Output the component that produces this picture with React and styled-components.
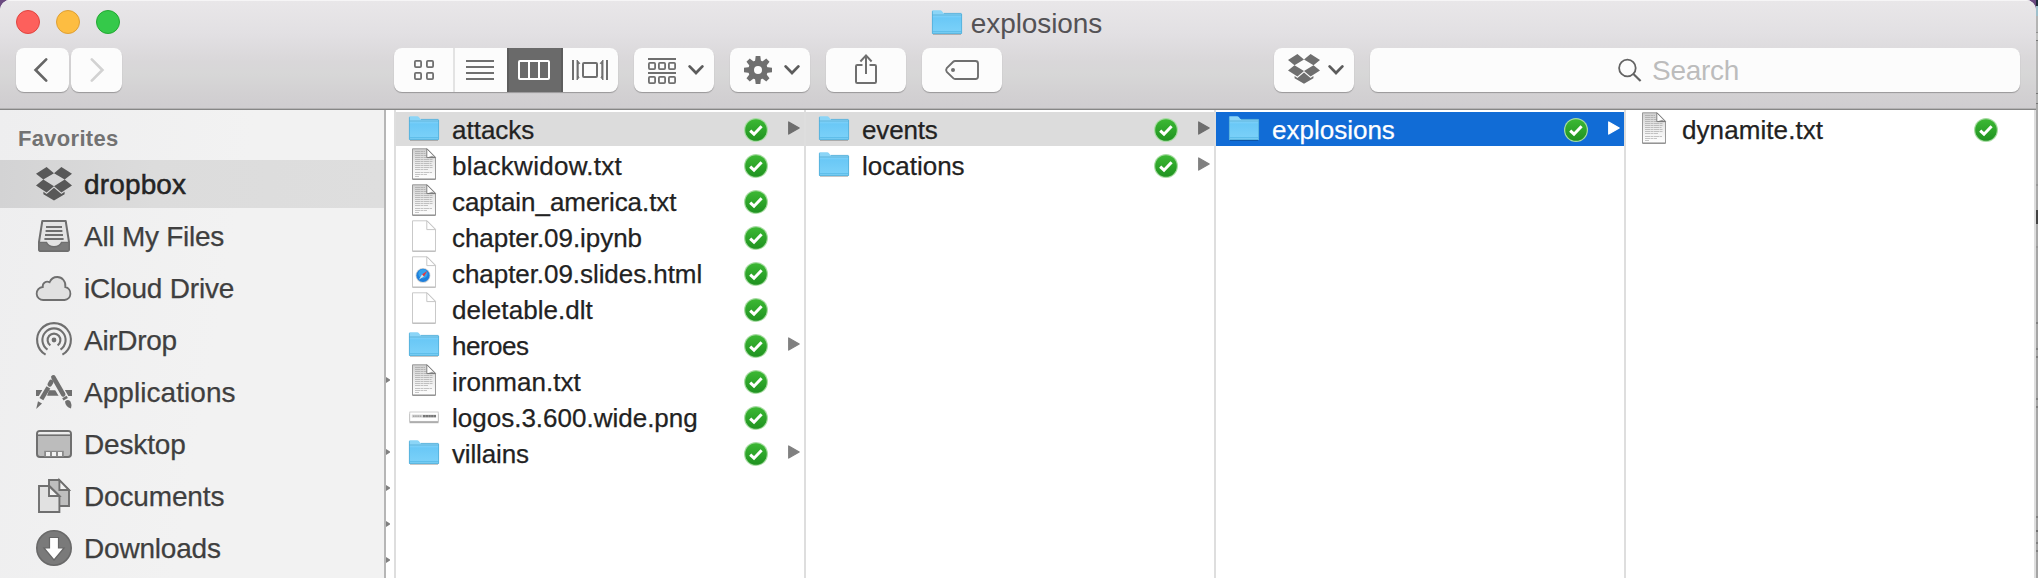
import React from "react";
import styled, { createGlobalStyle, css } from "styled-components";

const GlobalStyle = createGlobalStyle`
  * { box-sizing: border-box; }
  body {
    margin: 0;
    overflow: hidden;
    background: #6b4a80;
    font-family: "Liberation Sans", Arial, Helvetica, sans-serif;
  }
  svg { display: block; flex: none; overflow: visible; }
`;

/* ---------- layout ---------- */

const Desktop = styled.div`
  display: flex;
  width: 2038px;
  height: 578px;
`;

const Window = styled.div`
  display: flex;
  flex-direction: column;
  width: 2036px;
  height: 578px;
  border-radius: 10px 10px 0 0;
  overflow: hidden;
  background: #fff;
`;

const Backdrop = styled.div`
  width: 2px;
  height: 578px;
  background: linear-gradient(
    #1c2a3a 0 6px, #9fc0cc 6px 16px, #b4b4b4 16px 32px, #8f8f8f 32px 33px, #c0c0c0 33px 40px,
    #777 40px 41px, #b2b2b2 41px 93px, #777 93px 94px, #b2b2b2 94px 103px, #777 103px 104px,
    #a9a9a9 104px 184px, #979797 184px 186px, #a9a9a9 186px 210px, #444 210px 224px,
    #a9a9a9 224px 246px, #999 246px 248px, #a5a5a5 248px 322px, #7f7f7f 322px 324px,
    #a5a5a5 324px 348px, #808080 348px 350px, #a5a5a5 350px 356px, #808080 356px 358px,
    #a5a5a5 358px 398px, #808080 398px 400px, #a5a5a5 400px 406px, #808080 406px 408px,
    #a5a5a5 408px 516px, #808080 516px 518px, #a5a5a5 518px 530px, #707070 530px 532px,
    #a5a5a5 532px 542px, #808080 542px 544px, #a5a5a5 544px 550px, #808080 550px 552px,
    #a5a5a5 552px
  );
`;

const Header = styled.header`
  height: 110px;
  flex: none;
  border-bottom: 1px solid #868686;
  box-shadow: inset 0 -1px 0 #b4b3b4, inset 0 1px 0 #f6f5f6;
  background: linear-gradient(#e9e7e9 0, #e2e0e3 34px, #d9d7d9 62px, #d7d7d7 74px, #d2d0d2 95px, #cfcdd0 109px);
`;

const TitleBar = styled.div`
  display: grid;
  grid-template-columns: 1fr auto 1fr;
  height: 48px;
  padding: 10px 18px 0 16px;
`;

const Lights = styled.div`
  display: flex;
  gap: 16px;
`;

const Light = styled.span`
  width: 24px;
  height: 24px;
  border-radius: 50%;
  background: ${(p) => p.$fill};
  border: 1px solid ${(p) => p.$edge};
`;

const Title = styled.h1`
  display: flex;
  gap: 9px;
  margin: 0;
  height: 30px;
  font-size: 28px;
  font-weight: 400;
  line-height: 28px;
  letter-spacing: -0.1px;
  color: #545255;
`;

const Toolbar = styled.div`
  display: flex;
  padding-left: 16px;
`;

const Button = styled.button`
  display: flex;
  align-items: center;
  justify-content: ${(p) => (p.$menu ? "flex-start" : "center")};
  flex: none;
  width: ${(p) => p.$w || 80}px;
  height: 44px;
  margin: 0 ${(p) => p.$after ?? 16}px 0 0;
  padding: 0 ${(p) => p.$trim || 0}px ${(p) => p.$lift || 0}px ${(p) => p.$menu || 0}px;
  border: 0;
  border-radius: 8px;
  background: #fcfcfc;
  box-shadow: 0 1px 1px rgba(0, 0, 0, 0.28);
`;

const Segmented = styled.div`
  display: flex;
  width: 224px;
  height: 44px;
  margin-right: 16px;
  border-radius: 8px;
  overflow: hidden;
  background: #fcfcfc;
  box-shadow: 0 1px 1px rgba(0, 0, 0, 0.28);
`;

const Segment = styled.span`
  display: flex;
  align-items: center;
  width: ${(p) => p.$w}px;
  padding-left: ${(p) => p.$lead}px;
  ${(p) => p.$ruled && css`border-right: 2px solid #e3e3e3;`}
  ${(p) => p.$active && css`background: #6a6a6a; box-shadow: inset 2px 0 0 #5d5d5d, inset -2px 0 0 #5d5d5d;`}
`;

const SearchField = styled.label`
  display: flex;
  align-items: center;
  gap: 10px;
  width: 650px;
  height: 44px;
  padding-left: 248px;
  border-radius: 8px;
  background: #fcfcfc;
  box-shadow: 0 1px 1px rgba(0, 0, 0, 0.28);
  font-size: 28px;
  line-height: 44px;
  letter-spacing: -0.3px;
  color: #bcbcbc;
`;

const SearchHint = styled.span`
  padding-top: 1px;
`;

const ChevronSlot = styled.span`
  margin-left: ${(p) => p.$gap}px;
`;

const IconDrop = styled.span`
  padding-top: ${(p) => p.$top || 0}px;
  padding-bottom: ${(p) => p.$bottom || 0}px;
`;

const Body = styled.div`
  display: flex;
  height: 468px;
`;

const Sidebar = styled.nav`
  width: 386px;
  flex: none;
  overflow: hidden;
  border-right: 2px solid #b6b6b6;
  background: linear-gradient(100deg, #eeeeef, #f2f2f2 55%, #f2f2f2);
`;

const SidebarHeading = styled.h2`
  height: 50px;
  margin: 0;
  padding: 15px 0 0 18px;
  font-size: 22px;
  line-height: 28px;
  letter-spacing: 0.3px;
  color: #727272;
`;

const Place = styled.div`
  display: flex;
  align-items: center;
  height: 48px;
  margin-bottom: 4px;
  padding-left: 36px;
  font-size: 28px;
  line-height: 46px;
  color: ${(p) => (p.$active ? "#242424" : "#3f3f3f")};
  background: ${(p) => (p.$active ? "linear-gradient(90deg, #d3d3d4, #dcdcdc 40%, #dedede)" : "none")};
  -webkit-text-stroke: ${(p) => (p.$active ? "0.5px #242424" : "0.25px #3f3f3f")};
`;

const PlaceIcon = styled.span`
  display: flex;
  justify-content: center;
  width: 36px;
  margin-right: 12px;
`;

const PlaceName = styled.span`
  padding-top: 2px;
  letter-spacing: ${(p) => p.$track || 0}px;
`;

const Peek = styled.div`
  width: 10px;
  flex: none;
  overflow: hidden;
  border-right: 2px solid #dedede;
`;

const PeekRow = styled.div`
  display: flex;
  align-items: center;
  height: 36px;
`;

const Column = styled.div`
  width: 410px;
  flex: none;
  border-right: 2px solid #dedede;
`;

const Row = styled.div`
  display: flex;
  align-items: center;
  height: 36px;
  padding-left: 11px;
  border-top: 2px solid #fff;
  background: ${(p) => (p.$state === "active" ? "#116cd6" : p.$state === "path" ? "#dcdcdc" : "#fff")};
  color: ${(p) => (p.$state === "active" ? "#fff" : "#222")};
`;

const FileIcon = styled.span`
  display: flex;
  justify-content: center;
  width: 34px;
  height: 34px;
  margin-right: 11px;
  padding-top: ${(p) => ({ folder: 4, image: 10 }[p.$kind] || 0)}px;
`;

const FileName = styled.span`
  width: 292px;
  padding-top: 2px;
  font-size: 26px;
  line-height: 32px;
  white-space: nowrap;
  letter-spacing: ${(p) => p.$track || 0}px;
  -webkit-text-stroke: 0.25px currentColor;
`;

const CheckSlot = styled.span`
  width: 44px;
  padding-top: 2px;
`;

const ArrowSlot = styled.span`
  padding-bottom: 2px;
`;

/* ---------- icons ---------- */

const G = "#6f6f6f";

const Folder = () => (
  <svg width="30" height="26" viewBox="0 0 30 26">
    <defs>
      <linearGradient id="folderFront" x1="0" y1="0" x2="0" y2="1">
        <stop offset="0" stopColor="#83d3fa" />
        <stop offset="0.15" stopColor="#6ac8f6" />
        <stop offset="1" stopColor="#7dd2f9" />
      </linearGradient>
    </defs>
    <path d="M1 24.4H29" stroke="#000" strokeOpacity=".22" strokeWidth="1.2" />
    <path d="M0 1.2Q0 .2 1 .2H8.2Q9.2 .2 9.8 1L11.2 2.8Q11.6 3.2 12.4 3.2H29Q30 3.2 30 4.2V23Q30 24 29 24H1Q0 24 0 23Z" fill="#8bd5f7" />
    <path d="M0 5.2H30V23Q30 24 29 24H1Q0 24 0 23Z" fill="url(#folderFront)" />
    <path d="M.4 5V1.2M12 3.4H29.4M.4 5V23.4H29.6V4M0 5H30" fill="none" stroke="#51acd6" strokeWidth=".8" />
    <path d="M.5 21.6H29.5" stroke="#55b6e2" strokeWidth=".8" />
  </svg>
);

const textLines = [
  [3, 13, 3.5], [3, 13.5, 5.5], [3, 15.5, 7.5], [3, 16.5, 9.5], [3, 20.5, 11.5], [3, 20.5, 13.5],
  [3, 19.5, 15.5], [3, 20.5, 17.5], [3, 20.5, 19.5], [3, 16, 21.5], [3, 20, 24.5], [3, 15, 26.5], [3, 7, 28.5],
];

const Sheet = ({ kind }) => {
  const text = kind === "text";
  return (
    <svg width="24" height="32" viewBox="0 0 24 32">
      <defs>
        <linearGradient id="sheetShade" x1="0" y1="0" x2="0" y2="1">
          <stop offset="0" stopColor="#d0d0d0" />
          <stop offset="0.5" stopColor="#ececec" />
          <stop offset="1" stopColor="#fff" />
        </linearGradient>
      </defs>
      <path d="M.5 .8H15.2L23.5 9.2V31.2H.5Z" fill={text ? "url(#sheetShade)" : "#fff"} stroke={text ? "#999" : "#c9c9c9"} />
      <path d="M.5 31.2H23.5" stroke={text ? "#858585" : "#b5b5b5"} />
      {text && textLines.map(([a, b, y]) => (
        <path key={y} d={`M${a} ${y}H${b}`} stroke="#909090" strokeOpacity=".5" strokeWidth="1" strokeDasharray="5 .5 3 .5" />
      ))}
      <path d="M14.8 .8V9.6H23.4Z" fill="#fff" stroke={text ? "#808080" : "#c6c6c6"} strokeLinejoin="round" />
      {text && <path d="M15 9.6H23.5L20 7.8Z" fill="#555" opacity=".55" />}
      {kind === "html" && (
        <g>
          <circle cx="11" cy="19.4" r="7.4" fill="#c9ced2" />
          <circle cx="11" cy="19.4" r="6.6" fill="#1e7fdc" />
          <circle cx="11" cy="17.8" r="4.6" fill="#3fb2f2" opacity=".7" />
          <path d="M15.4 14.8L10 18.5L11.9 20.4Z" fill="#e8373b" />
          <path d="M6.8 23.8L10 18.5L11.9 20.4Z" fill="#d5e2ea" />
        </g>
      )}
    </svg>
  );
};

const WideImage = () => (
  <svg width="30" height="14" viewBox="0 0 30 14">
    <rect x="0" y="3.5" width="30" height="10" rx="1" fill="#000" opacity=".13" />
    <rect x=".8" y="4" width="28.4" height="8.6" fill="#8e8e8e" />
    <rect x=".8" y="2" width="28.4" height="9.3" fill="#fff" stroke="#bbb" strokeWidth=".7" />
    <rect x="2.8" y="4.6" width="24.4" height="3" fill="#d4d4d4" />
    <path d="M4 6.1H13" stroke="#999" strokeWidth="1.4" strokeDasharray="1.5 .7" />
    <path d="M14 6.1H27" stroke="#777" strokeWidth="2.2" strokeDasharray="2.4 .3" />
  </svg>
);

const Check = () => (
  <svg width="24" height="24" viewBox="0 0 24 24">
    <defs>
      <linearGradient id="checkFill" x1="0" y1="0" x2="0" y2="1">
        <stop offset="0" stopColor="#3cb834" />
        <stop offset="1" stopColor="#1f9220" />
      </linearGradient>
    </defs>
    <circle cx="12" cy="12" r="12" fill="#a5dba0" />
    <circle cx="12" cy="12" r="10.8" fill="url(#checkFill)" />
    <path d="M6.2 12.6L10 16.2L17.6 8.2" fill="none" stroke="#fff" strokeWidth="3" />
  </svg>
);

const Arrow = ({ color }) => (
  <svg width="12" height="14" viewBox="0 0 12 14">
    <path d="M.7 .9L11.2 7L.7 13.1Z" fill={color} stroke={color} strokeWidth="1.2" strokeLinejoin="round" />
  </svg>
);

const PeekArrow = () => (
  <svg width="4" height="6" viewBox="0 0 4 6">
    <path d="M0 0L4 2.6V3.4L0 6Z" fill="#808080" />
  </svg>
);

const Dropbox = ({ width, color }) => (
  <svg width={width} height={(width * 33.6) / 36} viewBox="0 0 36 33.6" fill={color}>
    <path d="M10.6 0L0 6.7L7.3 12.6L18 6.2ZM25.4 0L36 6.7L28.7 12.6L18 6.2ZM0 18.6L10.6 25.4L18 19.2L7.3 12.6ZM36 18.6L25.4 25.4L18 19.2L28.7 12.6ZM18 20.8L10.6 26.9L7.4 24.8V27.2L18 33.5L28.6 27.2V24.8L25.4 26.9Z" />
  </svg>
);

const Chevron = () => (
  <svg width="16" height="10" viewBox="0 0 16 10">
    <path d="M1.6 1.4L8 8L14.4 1.4" fill="none" stroke="#5c5c5c" strokeWidth="2.8" strokeLinecap="round" />
  </svg>
);

const MenuChevron = ({ gap }) => (
  <ChevronSlot $gap={gap}><Chevron /></ChevronSlot>
);

const NavArrow = ({ forward }) => (
  <svg width="14" height="24" viewBox="0 0 14 24">
    <path
      d={forward ? "M1.8 1.4L12.4 12L1.8 22.6" : "M12.2 1.4L1.6 12L12.2 22.6"}
      fill="none" stroke={forward ? "#d2d2d2" : "#666"} strokeWidth="2.7" strokeLinecap="round"
    />
  </svg>
);

const Cells = ({ cells }) => cells.map(([x, y]) => (
  <rect key={`${x}-${y}`} x={x + 0.9} y={y + 0.9} width="6.2" height="6.2" rx="1" fill="none" stroke={G} strokeWidth="1.8" />
));

const GridIcon = () => (
  <svg width="20" height="20" viewBox="0 0 20 20">
    <Cells cells={[[0, 0], [12, 0], [0, 12], [12, 12]]} />
  </svg>
);

const ListIcon = () => (
  <svg width="28" height="20" viewBox="0 0 28 20">
    <path d="M0 1H28M0 7H28M0 13H28M0 19H28" stroke={G} strokeWidth="2" />
  </svg>
);

const ColumnsIcon = () => (
  <svg width="32" height="20" viewBox="0 0 32 20">
    <rect x="1" y="1" width="30" height="18" rx="1" fill="none" stroke="#fff" strokeWidth="2" />
    <path d="M11 1V19M21 1V19" stroke="#fff" strokeWidth="2" />
  </svg>
);

const CoverFlowIcon = () => (
  <svg width="36" height="20" viewBox="0 0 36 20">
    <path d="M1 0V20M35 0V20" stroke={G} strokeWidth="2" />
    <path d="M5 0V20L7 17.4L6.2 16V4L7.8 3.4ZM31 0V20L29 17.4L29.8 16V4L28.2 3.4Z" fill={G} stroke={G} strokeWidth=".9" />
    <rect x="11" y="3" width="14" height="14" rx="1" fill="none" stroke={G} strokeWidth="2" />
  </svg>
);

const ArrangeIcon = () => (
  <svg width="28" height="26" viewBox="0 0 28 26">
    <path d="M0 1H28M0 15H28" stroke={G} strokeWidth="2" />
    <Cells cells={[[0, 4], [10, 4], [20, 4], [0, 18], [10, 18], [20, 18]]} />
  </svg>
);

const GearIcon = () => (
  <svg width="28" height="28" viewBox="-14 -14 28 28">
    {[0, 45, 90, 135, 180, 225, 270, 315].map((a) => (
      <path key={a} d="M-3.1 -8L-2.3 -14H2.3L3.1 -8Z" fill={G} transform={`rotate(${a})`} />
    ))}
    <circle r="6.9" fill="none" stroke={G} strokeWidth="5.8" />
  </svg>
);

const ShareIcon = () => (
  <svg width="22" height="30" viewBox="0 0 22 30" fill="none" stroke={G} strokeWidth="2">
    <path d="M7.5 11H2.2Q1 11 1 12.2V27.8Q1 29 2.2 29H19.8Q21 29 21 27.8V12.2Q21 11 19.8 11H14.5" />
    <path d="M11 20V1.5M5.4 7.5L11 1.4L16.6 7.5" />
  </svg>
);

const TagIcon = () => (
  <svg width="34" height="20" viewBox="0 0 34 20">
    <path d="M10 1H30.5Q33 1 33 3.5V16.5Q33 19 30.5 19H10Q9 19 8.2 18.2L1.8 12Q.4 10 1.8 8L8.2 1.8Q9 1 10 1Z" fill="none" stroke={G} strokeWidth="1.9" />
    <circle cx="8" cy="10" r="2" fill={G} />
  </svg>
);

const SearchIcon = () => (
  <svg width="24" height="24" viewBox="0 0 24 24" fill="none" stroke="#636363">
    <circle cx="9.4" cy="10" r="8.3" strokeWidth="1.8" />
    <path d="M15.4 16L22.6 23" strokeWidth="2.2" />
  </svg>
);

const TrayIcon = () => (
  <svg width="32" height="32" viewBox="0 0 32 32">
    <path d="M4.3 1H27.7L31 22V29.6Q31 31 29.6 31H2.4Q1 31 1 29.6V22Z" fill="#e4e4e4" stroke={G} strokeWidth="2" strokeLinejoin="round" />
    <path d="M1 22.4H8.4Q10.5 26.8 16 26.8T23.6 22.4H31V29.6Q31 31 29.6 31H2.4Q1 31 1 29.6Z" fill="#7b7b7b" stroke={G} strokeWidth="1.4" />
    <path d="M8 7H24M7.6 11H24.4M7 15H25M6.4 19H25.6" stroke={G} strokeWidth="1.8" />
  </svg>
);

const CloudIcon = () => (
  <svg width="36" height="25" viewBox="0 0 36 25">
    <path d="M7.5 24H28.5A6.6 6.6 0 0 0 29.3 11C30.2 5.6 26.2 1 21.3 1C17.7 1 14.8 3.2 13.6 6.3C10.2 4.3 6.2 7 6.8 11A6.5 6.5 0 0 0 7.5 24Z" fill="#e1e1e1" stroke={G} strokeWidth="1.8" />
  </svg>
);

/* Broken rings, open at the bottom, around a centre dot. */
const AirDropIcon = () => (
  <svg width="36" height="36" viewBox="-18 -18 36 36" fill="none" stroke={G} strokeWidth="2.1">
    <circle r="2.4" fill={G} stroke="none" />
    <path d="M-3.6 5.3A6.4 6.4 0 1 1 3.6 5.3" />
    <path d="M-6.5 9.6A11.6 11.6 0 1 1 6.5 9.6" />
    <path d="M-8.4 14.7A16.9 16.9 0 1 1 8.4 14.7" />
  </svg>
);

const AppsIcon = () => (
  <svg width="36" height="34" viewBox="0 0 36 34">
    <path d="M0 15H36V21H0Z" fill={G} />
    <path d="M18 9L10.5 21.5H24.5Z" fill="#efefef" />
    <path d="M17.4 2.2L29 22.3" stroke="#efefef" strokeWidth="7" strokeLinecap="round" />
    <path d="M14.6 7.5L4.4 25" stroke="#efefef" strokeWidth="6.8" />
    <path d="M12.9 15.2H22L24.2 20.8H11.2Z" fill={G} />
    <path d="M19.5 9L26.5 21" stroke="#efefef" strokeWidth="6.6" />
    <path d="M17.4 2.3L27.2 19.4" stroke={G} strokeWidth="4.6" strokeLinecap="round" />
    <path d="M28.4 21.9L29.7 24.2" stroke={G} strokeWidth="5" />
    <path d="M29 26.4Q32.6 23.6 34.6 26.8Q36.4 30.4 35 33.6Q29.5 31.8 29 26.4Z" fill={G} />
    <path d="M15.2 7L13.8 9.4" stroke={G} strokeWidth="4.6" strokeLinecap="round" />
    <path d="M12.4 12.4L5.4 24.2" stroke={G} strokeWidth="4.4" />
    <path d="M2 26.2L6 28.4L.2 34Z" fill={G} />
  </svg>
);

const DesktopIcon = () => (
  <svg width="36" height="28" viewBox="0 0 36 28">
    <rect x="1" y="1" width="34" height="26" rx="3" fill="#bcbcbc" stroke={G} strokeWidth="2" />
    <path d="M2 3.5Q2 2 3.5 2H32.5Q34 2 34 3.5V4.4H2Z" fill="#ededed" />
    <path d="M1 5.2H35" stroke={G} strokeWidth="1.6" />
    <rect x="8.2" y="20.8" width="19.6" height="6" fill="#8a8a8a" />
    <path d="M10 22H14V26H10ZM16 22H20V26H16ZM22 22H26V26H22Z" fill="#f2f2f2" />
  </svg>
);

const DocumentsIcon = () => (
  <svg width="32" height="34" viewBox="0 0 32 34" stroke={G} strokeWidth="1.9">
    <path d="M11 1H21L31 11V27H11Z" fill="#bebebe" />
    <path d="M21.4 1V11H31Z" fill="#f2f2f2" />
    <path d="M1 7H11.4L21.4 17V33H1Z" fill="#e1e1e1" />
    <path d="M11 7V17H21.4Z" fill="#f2f2f2" />
  </svg>
);

const DownloadIcon = () => (
  <svg width="36" height="36" viewBox="0 0 36 36">
    <circle cx="18" cy="18" r="17.2" fill="#7a7a7a" stroke="#696969" strokeWidth="1.6" />
    <path d="M13.5 7.5H22.5V18H28L18 30L8 18H13.5Z" fill="#fff" stroke="#666" strokeWidth="1.2" />
  </svg>
);

/* ---------- data ---------- */

const places = [
  { name: "dropbox", icon: <Dropbox width={36} color="#585858" />, active: true, track: 0.15 },
  { name: "All My Files", icon: <TrayIcon />, track: -0.25 },
  { name: "iCloud Drive", icon: <CloudIcon />, track: -0.2 },
  { name: "AirDrop", icon: <AirDropIcon />, track: -0.3 },
  { name: "Applications", icon: <AppsIcon />, track: 0.05 },
  { name: "Desktop", icon: <DesktopIcon />, track: -0.15 },
  { name: "Documents", icon: <DocumentsIcon />, track: -0.15 },
  { name: "Downloads", icon: <DownloadIcon />, track: -0.2 },
];

const columns = [
  [
    { name: "attacks", kind: "folder", state: "path" },
    { name: "blackwidow.txt", kind: "text", track: 0.28 },
    { name: "captain_america.txt", kind: "text", track: -0.05 },
    { name: "chapter.09.ipynb", kind: "blank", track: -0.05 },
    { name: "chapter.09.slides.html", kind: "html", track: -0.06 },
    { name: "deletable.dlt", kind: "blank", track: 0.05 },
    { name: "heroes", kind: "folder", track: -0.5 },
    { name: "ironman.txt", kind: "text" },
    { name: "logos.3.600.wide.png", kind: "image" },
    { name: "villains", kind: "folder", track: -0.15 },
  ],
  [
    { name: "events", kind: "folder", state: "path", track: -0.15 },
    { name: "locations", kind: "folder" },
  ],
  [{ name: "explosions", kind: "folder", state: "active" }],
  [{ name: "dynamite.txt", kind: "text", track: 0.08 }],
];

const peekRows = [0, 0, 0, 0, 0, 0, 0, 1, 0, 1, 1, 1, 1];

const arrowColor = { active: "#fff", path: "#6e6e6e" };

function FileRow({ file }) {
  return (
    <Row $state={file.state}>
      <FileIcon $kind={file.kind}>
        {file.kind === "folder" ? <Folder /> : file.kind === "image" ? <WideImage /> : <Sheet kind={file.kind} />}
      </FileIcon>
      <FileName $track={file.track}>{file.name}</FileName>
      <CheckSlot><Check /></CheckSlot>
      {file.kind === "folder" && <ArrowSlot><Arrow color={arrowColor[file.state] || "#808080"} /></ArrowSlot>}
    </Row>
  );
}

export default function App() {
  return (
    <Desktop>
      <GlobalStyle />
      <Window>
        <Header>
          <TitleBar>
            <Lights>
              <Light $fill="#fd605c" $edge="#e0443f" />
              <Light $fill="#fdbd41" $edge="#de9f34" />
              <Light $fill="#35c94a" $edge="#23a833" />
            </Lights>
            <Title><Folder />explosions</Title>
          </TitleBar>
          <Toolbar>
            <Button $w={53} $after={2} $trim={3}><NavArrow /></Button>
            <Button $w={51} $after={272}><NavArrow forward /></Button>
            <Segmented>
              <Segment $w={61} $lead={20} $ruled><GridIcon /></Segment>
              <Segment $w={52} $lead={11}><ListIcon /></Segment>
              <Segment $w={56} $lead={11} $active><ColumnsIcon /></Segment>
              <Segment $w={55} $lead={9}><CoverFlowIcon /></Segment>
            </Segmented>
            <Button $menu={14}><IconDrop $top={2}><ArrangeIcon /></IconDrop><MenuChevron gap={12} /></Button>
            <Button $menu={14}><GearIcon /><MenuChevron gap={12} /></Button>
            <Button $lift={2}><ShareIcon /></Button>
            <Button $after={272}><TagIcon /></Button>
            <Button $menu={14}><IconDrop $bottom={2}><Dropbox width={32} color={G} /></IconDrop><MenuChevron gap={8} /></Button>
            <SearchField><SearchIcon /><SearchHint>Search</SearchHint></SearchField>
          </Toolbar>
        </Header>
        <Body>
          <Sidebar>
            <SidebarHeading>Favorites</SidebarHeading>
            {places.map((p) => (
              <Place key={p.name} $active={p.active}>
                <PlaceIcon>{p.icon}</PlaceIcon>
                <PlaceName $track={p.track}>{p.name}</PlaceName>
              </Place>
            ))}
          </Sidebar>
          <Peek>
            {peekRows.map((on, i) => <PeekRow key={i}>{on ? <PeekArrow /> : null}</PeekRow>)}
          </Peek>
          {columns.map((files, i) => (
            <Column key={i}>
              {files.map((f) => <FileRow key={f.name} file={f} />)}
            </Column>
          ))}
        </Body>
      </Window>
      <Backdrop />
    </Desktop>
  );
}
